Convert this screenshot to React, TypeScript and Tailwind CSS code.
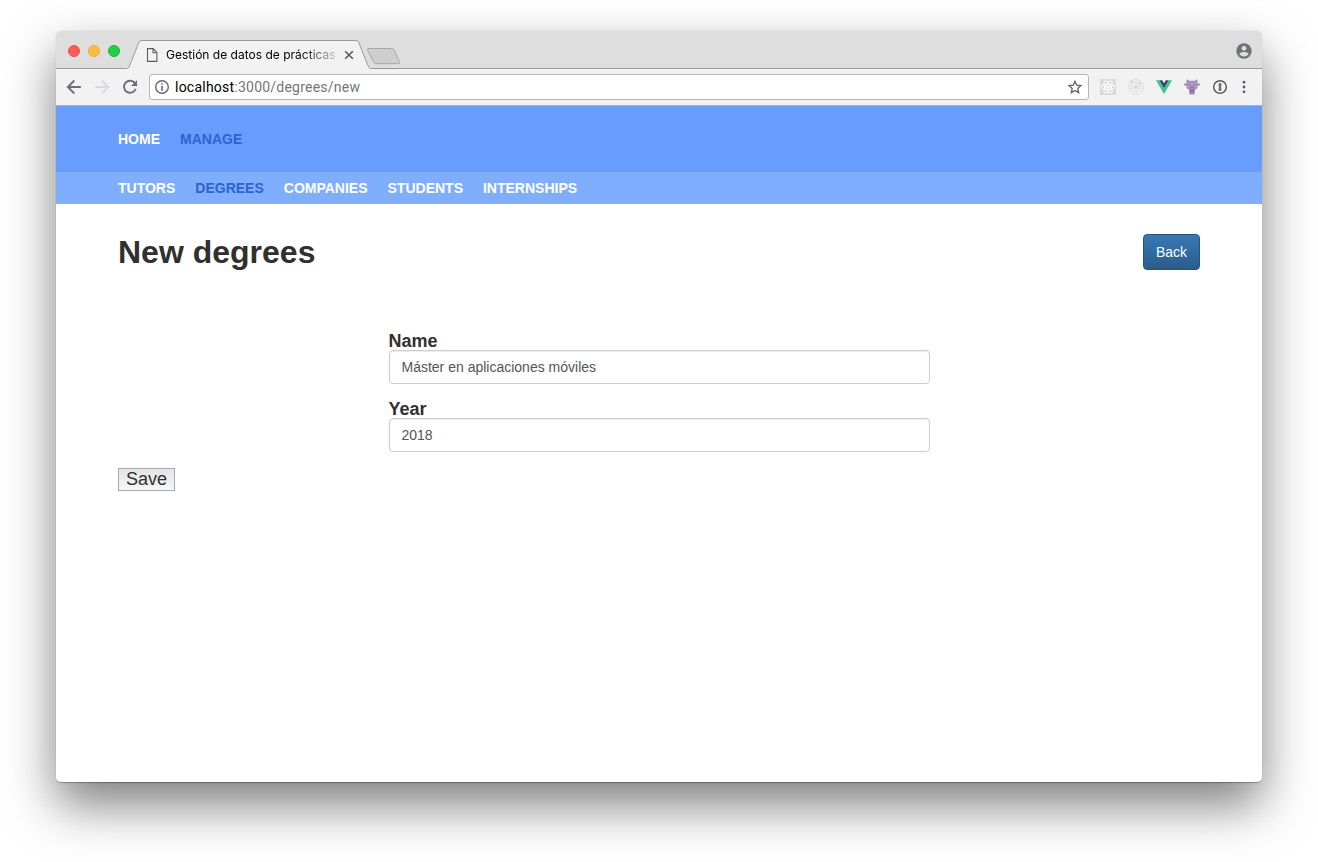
import { ReactNode } from "react";

const EXTENSION_GRAY = "#dadada";

function TabStrip() {
  return (
    <div className="relative h-[38px] w-full shrink-0 bg-[#dedede]">
      <svg className="absolute inset-0" width="1206" height="38" viewBox="0 0 1206 38" fill="none">
        <path d="M0 37.5H70.5C72 37.5 72.8 36.5 73.4 35L82.6 12.2C83.4 10.2 84.2 9.5 85.9 9.5H300C301.8 9.5 302.4 10.3 303 12L312.2 35C312.9 36.7 313.7 37.5 315.2 37.5H1206V38H0Z" fill="#f2f2f2" />
        <path d="M0 37.5H70.5C72 37.5 72.8 36.5 73.4 35L82.6 12.2C83.4 10.2 84.2 9.5 85.9 9.5H300C301.8 9.5 302.4 10.3 303 12L312.2 35C312.9 36.7 313.7 37.5 315.2 37.5H1206" stroke="#999" />
        <path d="M313 17.5H335.5C337 17.5 337.8 18 338.3 19.2L343.4 31C343.9 32.2 343.5 32.7 342.2 32.7H320.5C319 32.7 318.2 32.3 317.7 31.2L311.5 19.3C311 18.2 311.5 17.5 313 17.5Z" fill="#cecece" stroke="#a8a8a8" />
      </svg>
      <div className="relative flex h-full items-center">
        <div className="ml-3 flex gap-2 pt-[2px]">
          <span className="size-3 rounded-full border border-[#e9504a] bg-[#fe5b55]" />
          <span className="size-3 rounded-full border border-[#e9a935] bg-[#febd3b]" />
          <span className="size-3 rounded-full border border-[#1bb634] bg-[#22cf46]" />
        </div>
        <svg className="ml-[26px] mt-[10px] shrink-0" width="12" height="14" viewBox="0 0 12 14" fill="none" stroke="#5c5c5c" strokeWidth="1.1">
          <path d="M1.500 .6H7.200L10.900 4.500V13.400H1.500Z" />
          <path d="M7 .6V4.700H10.900" />
        </svg>
        <div className="ml-2 mt-[10px] w-[170px] overflow-hidden whitespace-nowrap bg-linear-to-r from-black from-75% to-[#ccc] bg-clip-text font-[Inter,sans-serif] text-[12px] leading-4 tracking-[0.01px] text-transparent">
          Gestión de datos de prácticas
        </div>
        <svg className="ml-2 mt-[10px]" width="10" height="10" viewBox="0 0 10 10" stroke="#555" strokeWidth="1.5">
          <path d="M1.200 1.200L8.800 8.800M8.800 1.200L1.200 8.800" />
        </svg>
        <svg className="ml-auto mr-[10px] mt-[2px]" width="16" height="16" viewBox="0 0 16 16">
          <circle cx="8" cy="8" r="7.7" fill="#6e7276" />
          <circle cx="8" cy="5.3" r="2.4" fill="#dedede" />
          <path d="M3.300 10.900C4.200 9.500 6.300 8.900 8 8.900s3.800 .6 4.700 2C11.700 12.500 10 13.400 8 13.400s-3.700-.9-4.700-2.500Z" fill="#dedede" />
        </svg>
      </div>
    </div>
  );
}

function Extensions() {
  return (
    <div className="flex items-center gap-3">
      <svg width="16" height="16" viewBox="0 0 16 16">
        <path d="M0 0H16V16H0Z" fill={EXTENSION_GRAY} />
        <g fill="none" stroke="#fafafa" strokeWidth="1.1">
          <ellipse cx="8" cy="8" rx="6.6" ry="2.6" />
          <ellipse cx="8" cy="8" rx="6.6" ry="2.6" transform="rotate(60 8 8)" />
          <ellipse cx="8" cy="8" rx="6.6" ry="2.6" transform="rotate(120 8 8)" />
        </g>
        <circle cx="8" cy="8" r="1.3" fill="#fff" />
      </svg>
      <svg width="16" height="16" viewBox="0 0 16 16" fill="none" stroke={EXTENSION_GRAY}>
        <circle cx="8" cy="8" r="7.4" />
        <circle cx="8" cy="8" r="4.6" />
        <circle cx="8" cy="8" r="1.8" fill="#d8d8d8" />
        <circle cx="3.3" cy="2.6" r="1.2" fill="#d4d4d4" />
        <circle cx="11.7" cy="4.6" r="1.1" fill="#d4d4d4" />
      </svg>
      <svg width="16" height="16" viewBox="0 0 16 16">
        <path d="M0 1.200H3.300L8 9.300L12.700 1.200H16L8 15Z" fill="#42c095" />
        <path d="M3.300 1.200H6.200L8 4.300L9.800 1.200H12.700L8 9.300Z" fill="#384960" />
      </svg>
      <svg width="16" height="16" viewBox="0 0 16 16">
        <path d="M2.500 0L5 1.800H11L13.500 0V4.500H16V6.200L13.500 7V9L12 10.300H4L2.500 9V7L0 6.200V4.500H2.500Z" fill="#a18fba" />
        <path d="M5.300 10H10.700L11.200 12.500H10.500V15.600H8.500V14.500H7.500V15.600H5.500V12.500H4.800Z" fill="#8e7aa8" />
        <path d="M3.200 3.500H12.800V8.500H3.200Z" fill="#ad9bc5" />
        <path d="M4.600 5H5.800V6.200H4.600ZM10.200 5h1.200V6.200H10.200ZM6 7.700H10V8.400H6Z" fill="#6f598f" />
      </svg>
      <svg width="16" height="16" viewBox="0 0 16 16">
        <circle cx="8" cy="8" r="6.3" fill="#f4f4f4" stroke="#5a5a5a" strokeWidth="1.5" />
        <path d="M6.700 4.300H9.300V7L8.900 7.700L9.300 8.300V11.700H6.700V8.800L7.100 8.200L6.700 7.600Z" fill="#5a5a5a" />
        <path d="M8 5.500V10.500" stroke="#b5b5b5" strokeWidth=".6" />
      </svg>
      <svg className="-ml-1" width="16" height="16" viewBox="0 0 16 16" fill="#5a5d61">
        <circle cx="8" cy="3.2" r="1.4" />
        <circle cx="8" cy="8" r="1.4" />
        <circle cx="8" cy="12.8" r="1.4" />
      </svg>
    </div>
  );
}

function Toolbar() {
  return (
    <div className="flex h-[37px] shrink-0 items-center border-b border-[#b3b3b3] bg-[#f2f2f2] px-[10px]">
      <svg width="16" height="16" viewBox="0 0 16 16" fill="none" stroke="#6c7074" strokeWidth="1.9">
        <path d="M14.800 8H2.500M8.300 1.500L1.800 8L8.300 14.500" />
      </svg>
      <svg className="ml-3" width="16" height="16" viewBox="0 0 16 16" fill="none" stroke="#d9dadc" strokeWidth="1.9">
        <path d="M1.200 8H13.500M7.700 1.500L14.200 8L7.700 14.500" />
      </svg>
      <svg className="ml-3" width="16" height="16" viewBox="0 0 16 16" fill="none">
        <path d="M12.900 4.200A6 6 0 1 0 13.700 9.800" stroke="#6c7074" strokeWidth="1.9" />
        <path d="M15 1V7H9Z" fill="#6c7074" />
      </svg>
      <div className="mx-[11px] flex h-[26px] flex-1 items-center rounded-[3px] border border-[#b5b5b5] bg-white pl-[5px] pr-[6px]">
        <svg width="14" height="14" viewBox="0 0 14 14" fill="none">
          <circle cx="7" cy="7" r="6.3" stroke="#63666a" strokeWidth="1.4" />
          <path d="M6.200 3.300H7.800V4.800H6.200ZM6.200 6H7.800V10.800H6.200Z" fill="#63666a" />
        </svg>
        <div className="ml-[6px] font-[Roboto,sans-serif] text-[14px] leading-4 tracking-[0.23px] text-[#757575]">
          <span className="text-black">localhost</span>:3000/degrees/new
        </div>
        <svg className="ml-auto" width="14" height="14" viewBox="0 0 14 14" fill="none" stroke="#606468" strokeWidth="1.3">
          <path d="M7 1.300L8.700 5.200L13 5.600L9.800 8.400L10.700 12.600L7 10.400L3.300 12.600L4.200 8.400L1 5.600L5.300 5.200Z" />
        </svg>
      </div>
      <Extensions />
    </div>
  );
}

function NavItem({ active, children }: { active?: boolean; children: ReactNode }) {
  return (
    <a className={active ? "text-[#2f62d3]" : "text-white"}>{children}</a>
  );
}

function Field({ label, value }: { label: string; value: string }) {
  return (
    <div className="mb-[14px]">
      <label className="block h-5 text-[18px] font-bold leading-[22px] text-[#303030]">{label}</label>
      <input
        className="block h-[34px] w-full rounded-[4px] border border-[#ccc] bg-white px-3 text-[14px] text-[#555] shadow-[inset_0_1px_1px_rgba(0,0,0,0.075)] outline-none"
        defaultValue={value}
      />
    </div>
  );
}

export default function App() {
  return (
    <div className="flex h-[862px] w-[1318px] overflow-hidden bg-white px-14 pb-20 pt-[31px] font-['Liberation_Sans',Arial,sans-serif]">
      <div className="flex w-full rounded-[5px] shadow-[0_0.5px_1px_0_rgba(0,0,0,0.3),0_23px_50px_rgba(0,0,0,0.51)]">
        <div className="flex w-full flex-col overflow-hidden rounded-[5px] bg-white">
          <TabStrip />
          <Toolbar />
          <nav className="flex h-[66px] shrink-0 items-center gap-5 bg-[#689dff] px-[62px] text-[14px] font-bold">
            <NavItem>HOME</NavItem>
            <NavItem active>MANAGE</NavItem>
          </nav>
          <nav className="flex h-8 shrink-0 items-center gap-5 bg-[#80aeff] px-[62px] text-[14px] font-bold">
            <NavItem>TUTORS</NavItem>
            <NavItem active>DEGREES</NavItem>
            <NavItem>COMPANIES</NavItem>
            <NavItem>STUDENTS</NavItem>
            <NavItem>INTERNSHIPS</NavItem>
          </nav>
          <main className="px-[62px] pt-[30px]">
            <div className="flex h-9 items-center justify-between">
              <h1 className="text-[32px] font-bold leading-9 text-[#303030]">New degrees</h1>
              <button className="h-9 w-[57px] rounded-[4px] border border-[#245580] bg-linear-to-b from-[#3779b5] to-[#2a5c8b] text-[14px] text-white">
                Back
              </button>
            </div>
            <form className="pt-[60px]">
              <div className="mx-auto w-[541px]">
                <Field label="Name" value="Máster en aplicaciones móviles" />
                <Field label="Year" value="2018" />
              </div>
              <button type="button" className="mt-4 flex h-[23px] w-[57px] items-center justify-center border border-[#a9a9a9] bg-linear-to-b from-[#e4e4e4] to-[#f6f6f6] pb-[2px] text-[18px] leading-none text-[#303030]">
                Save
              </button>
            </form>
          </main>
        </div>
      </div>
    </div>
  );
}
